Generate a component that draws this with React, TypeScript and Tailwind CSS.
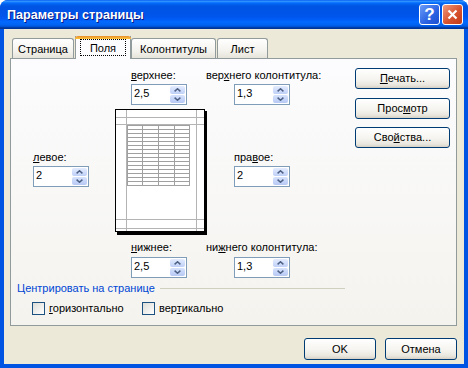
import React from "react";

const ui = "font-['Liberation_Sans',Arial,sans-serif] text-[11px] leading-[13px] text-black";

const Arrow = ({ down }: { down?: boolean }) => (
  <svg width="7" height="4" viewBox="0 0 7 4" className={down ? "rotate-180" : ""}>
    <path d="M0.6 3.4 L3.5 0.8 L6.4 3.4" fill="none" stroke="#4d6185" strokeWidth="1.5" />
  </svg>
);

const SpinBox = ({ value, className = "" }: { value: string; className?: string }) => (
  <div className={`flex h-[21px] w-[56px] border border-[#7f9db9] bg-white p-[1px] ${className}`}>
    <span className="flex-1 pl-[1px] pt-[1px]">{value}</span>
    <div className="flex w-[15px] flex-col gap-px">
      <div className="flex flex-1 items-center justify-center rounded-[2px] bg-[linear-gradient(to_bottom,#e3ebfe,#bfd0f7)]">
        <Arrow />
      </div>
      <div className="flex flex-1 items-center justify-center rounded-[2px] bg-[linear-gradient(to_bottom,#d6e2fd,#b7c9f4)]">
        <Arrow down />
      </div>
    </div>
  </div>
);

const XpButton = ({ children, className = "" }: { children: React.ReactNode; className?: string }) => (
  <div
    className={`flex items-center justify-center rounded-[3px] border border-[#003c74] bg-[linear-gradient(to_bottom,#ffffff_0%,#f5f4ef_55%,#e8e6dd_85%,#d6d0c5_100%)] ${className}`}
  >
    {children}
  </div>
);

const Checkbox = ({ children }: { children: React.ReactNode }) => (
  <div className="flex items-center">
    <div className="h-[13px] w-[13px] border border-[#1c5180] bg-[linear-gradient(135deg,#dcdcd7,#ffffff)]" />
    <span className="ml-[4px]">{children}</span>
  </div>
);

// page preview drawing
const PagePreview = () => {
  const rows = Array.from({ length: 16 }, (_, i) => 16 + i * 4);
  const cols = [12, 27, 43, 59, 74];
  return (
    <svg width="92" height="126" viewBox="0 0 92 126" shapeRendering="crispEdges">
      <rect x="2" y="2" width="90" height="124" fill="#000" />
      <rect x="0.5" y="0.5" width="89" height="122" fill="#fff" stroke="#000" />
      <g stroke="#b4b4b4">
        <line x1="11.5" y1="1" x2="11.5" y2="122" />
        <line x1="81.5" y1="1" x2="81.5" y2="122" />
        <line x1="1" y1="8.5" x2="89" y2="8.5" />
        <line x1="1" y1="15.5" x2="89" y2="15.5" />
        <line x1="1" y1="110.5" x2="89" y2="110.5" />
        <line x1="1" y1="119.5" x2="89" y2="119.5" />
      </g>
      <g stroke="#a0a0a0">
        {rows.map((y) => (
          <line key={y} x1="12" y1={y + 0.5} x2="75" y2={y + 0.5} />
        ))}
        {cols.map((x) => (
          <line key={x} x1={x + 0.5} y1="16" x2={x + 0.5} y2="77" />
        ))}
      </g>
    </svg>
  );
};

export default function App() {
  return (
    <div className={`h-[368px] w-[468px] bg-white ${ui}`}>
      <div className="flex h-full flex-col overflow-hidden rounded-t-[8px] bg-[#0054e3]">
        {/* Title bar */}
        <div className="flex h-[29px] items-center bg-[linear-gradient(to_bottom,#0058ee_0%,#3593ff_4%,#288eff_6%,#127dff_8%,#036ffc_10%,#0262ee_14%,#0057e5_20%,#0054e3_24%,#0055eb_56%,#005bf5_66%,#026afe_76%,#0062ef_86%,#0052d6_92%,#0040ab_94%,#003092_100%)] pl-[7px] pr-[5px]">
          <span className="flex-1 text-[12.6px] font-bold leading-[16px] text-white [text-shadow:1px_1px_#0a1883]">
            Параметры страницы
          </span>
          <div className="flex h-[21px] w-[21px] items-center justify-center rounded-[3px] border border-white bg-[linear-gradient(135deg,#6b9cf8,#2a62e2_60%,#1a4fd0)] text-[17px] font-bold text-white">
            ?
          </div>
          <div className="ml-[2px] flex h-[21px] w-[21px] items-center justify-center rounded-[3px] border border-white bg-[linear-gradient(135deg,#f09a7e,#d8532f_55%,#c23b18)]">
            <svg width="11" height="11" viewBox="0 0 11 11">
              <path d="M1.5 1.5 L9.5 9.5 M9.5 1.5 L1.5 9.5" stroke="#fff" strokeWidth="2.2" />
            </svg>
          </div>
        </div>

        {/* Body */}
        <div className="mx-[4px] mb-[4px] flex flex-1 flex-col bg-[#ece9d8] pl-[6px] pr-[7px] pt-[7px]">
          {/* Tabs */}
          <div className="ml-[2px] flex h-[22px] items-end">
            <div className="h-[20px] w-[62px] rounded-t-[3px] border border-b-0 border-[#919b9c] bg-[linear-gradient(to_bottom,#ffffff,#f4f3ee_60%,#e6e4da)] pt-[4px] text-center">
              Страница
            </div>
            <div className="relative z-10 mb-[-1px] ml-[1px] flex h-[23px] w-[56px] flex-col border-x border-[#919b9c] bg-[#fcfcfe]">
              <div className="-mx-px h-[3px] rounded-t-[3px] bg-[linear-gradient(to_bottom,#e68b2c,#ffc73c)]" />
              <div className="mx-[4px] h-[17px] border border-dotted border-black pt-[2px] text-center">Поля</div>
            </div>
            <div className="h-[20px] w-[85px] rounded-t-[3px] border border-b-0 border-[#919b9c] bg-[linear-gradient(to_bottom,#ffffff,#f4f3ee_60%,#e6e4da)] pt-[4px] text-center">
              Колонтитулы
            </div>
            <div className="ml-[1px] h-[20px] w-[51px] rounded-t-[3px] border border-b-0 border-[#919b9c] bg-[linear-gradient(to_bottom,#ffffff,#f4f3ee_60%,#e6e4da)] pt-[4px] text-center">
              Лист
            </div>
          </div>

          {/* Tab panel */}
          <div className="flex h-[268px] border border-[#919b9c] bg-[linear-gradient(to_bottom,#fcfcfe,#f4f3ee)]">
            <div className="flex flex-1 flex-col">
              {/* top margins */}
              <div className="ml-[120px] mt-[10px] flex">
                <div className="w-[75px]">
                  <div>
                    <u>в</u>ерхнее:
                  </div>
                  <SpinBox value="2,5" className="mt-[2px]" />
                </div>
                <div>
                  <div>
                    вер<u>х</u>него колонтитула:
                  </div>
                  <SpinBox value="1,3" className="ml-[28px] mt-[2px]" />
                </div>
              </div>

              {/* left / preview / right */}
              <div className="ml-[22px] mt-[4px] flex">
                <div className="w-[82px] pt-[42px]">
                  <div>
                    <u>л</u>евое:
                  </div>
                  <SpinBox value="2" className="mt-[2px]" />
                </div>
                <PagePreview />
                <div className="ml-[27px] pt-[42px]">
                  <div>
                    пра<u>в</u>ое:
                  </div>
                  <SpinBox value="2" className="mt-[2px]" />
                </div>
              </div>

              {/* bottom margins */}
              <div className="ml-[120px] mt-[6px] flex">
                <div className="w-[75px]">
                  <div>
                    <u>н</u>ижнее:
                  </div>
                  <SpinBox value="2,5" className="mt-[3px]" />
                </div>
                <div>
                  <div>
                    ни<u>ж</u>него колонтитула:
                  </div>
                  <SpinBox value="1,3" className="ml-[28px] mt-[3px]" />
                </div>
              </div>

              {/* centering group */}
              <div className="ml-[6px] mr-[10px] mt-[4px] flex items-center">
                <span className="text-[#0046d5]">Центрировать на странице</span>
                <div className="ml-[5px] h-px flex-1 bg-[#d0d0bf]" />
              </div>
              <div className="ml-[21px] mt-[7px] flex">
                <div className="w-[110px]">
                  <Checkbox>
                    <u>г</u>оризонтально
                  </Checkbox>
                </div>
                <Checkbox>
                  вер<u>т</u>икально
                </Checkbox>
              </div>
            </div>

            {/* right buttons */}
            <div className="mr-[6px] mt-[9px] flex w-[95px] flex-col">
              <XpButton className="h-[21px]">
                <span>
                  <u>П</u>ечать...
                </span>
              </XpButton>
              <XpButton className="mt-[9px] h-[21px]">
                <span>
                  Прос<u>м</u>отр
                </span>
              </XpButton>
              <XpButton className="mt-[8px] h-[21px]">
                <span>
                  Сво<u>й</u>ства...
                </span>
              </XpButton>
            </div>
          </div>

          {/* dialog buttons */}
          <div className="mt-[12px] flex justify-end gap-[9px]">
            <XpButton className="h-[22px] w-[72px]">OK</XpButton>
            <XpButton className="h-[22px] w-[72px]">Отмена</XpButton>
          </div>
        </div>
      </div>
    </div>
  );
}
